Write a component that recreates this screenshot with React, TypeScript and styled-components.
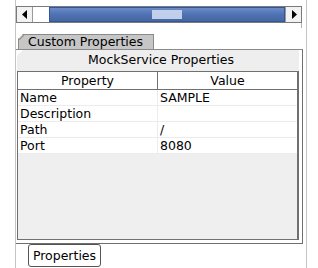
import React from 'react';
import styled, { createGlobalStyle } from 'styled-components';

const GlobalStyle = createGlobalStyle`
  html, body {
    margin: 0;
    padding: 0;
    background: #ffffff;
  }
  body {
    font-family: 'DejaVu Sans', 'Liberation Sans', sans-serif;
    font-size: 12.5px;
    color: #000;
  }
`;

interface IRow {
  name: string;
  value: string;
}

const rows: IRow[] = [
  { name: 'Name', value: 'SAMPLE' },
  { name: 'Description', value: '' },
  { name: 'Path', value: '/' },
  { name: 'Port', value: '8080' },
];

const ArrowLeft = () => (
  <svg width="6" height="9" viewBox="0 0 6 9">
    <path d="M5 0 L0 4.5 L5 9 Z" fill="#000" />
  </svg>
);

const ArrowRight = () => (
  <svg width="6" height="9" viewBox="0 0 6 9">
    <path d="M1 0 L6 4.5 L1 9 Z" fill="#000" />
  </svg>
);

const App: React.FC = () => (
  <>
    <GlobalStyle />
    <SFrame>
      <SScrollBar>
        <SArrowButton>
          <ArrowLeft />
        </SArrowButton>
        <STrack />
        <SThumb>
          <SGrip />
        </SThumb>
        <SArrowButton>
          <ArrowRight />
        </SArrowButton>
      </SScrollBar>
      <STabStrip>
        <STab>Custom Properties</STab>
        <STick />
      </STabStrip>
      <SPanel>
        <STitle>MockService Properties</STitle>
        <SScrollPane>
          <STable>
            <SHeaderCell>Property</SHeaderCell>
            <SHeaderCell $last>Value</SHeaderCell>
            {rows.map((row) => (
              <React.Fragment key={row.name}>
                <SCell>{row.name}</SCell>
                <SCell $last>{row.value}</SCell>
              </React.Fragment>
            ))}
          </STable>
        </SScrollPane>
      </SPanel>
      <SFooter>
        <SButton>Properties</SButton>
      </SFooter>
    </SFrame>
  </>
);

export default App;

const SFrame = styled.div`
  box-sizing: border-box;
  margin-left: 15px;
  width: 292px;
  height: 268px;
  border-left: 1px solid #c4c4c4;
  border-right: 1px solid #c4c4c4;
  display: flex;
  flex-direction: column;
`;

const SScrollBar = styled.div`
  box-sizing: border-box;
  margin-top: 6px;
  width: 286px;
  height: 17px;
  border: 1px solid #7a7a7a;
  display: flex;
  background: #fff;
`;

const SArrowButton = styled.div`
  width: 15px;
  flex: none;
  display: flex;
  align-items: center;
  justify-content: center;
  background: #f2f2f2;
  border-left: 1px solid #9a9a9a;
  &:first-child {
    border-left: none;
    border-right: 1px solid #9a9a9a;
  }
`;

const STrack = styled.div`
  width: 16px;
  flex: none;
  background: #fff;
`;

const SThumb = styled.div`
  flex: 1;
  box-sizing: border-box;
  border: 1px solid #35559a;
  background: linear-gradient(#6b8cc8, #4f72b4 50%, #45689f);
  display: flex;
  align-items: center;
  justify-content: center;
`;

const SGrip = styled.div`
  width: 30px;
  height: 9px;
  background-image: radial-gradient(circle, #c9d6ee 0.7px, transparent 0.8px);
  background-size: 2px 2px;
`;

const STabStrip = styled.div`
  margin-top: 11px;
  padding-left: 2px;
  display: flex;
  height: 15px;
`;

const STick = styled.div`
  margin-left: auto;
  margin-right: 4px;
  margin-top: -11px;
  width: 1px;
  height: 5px;
  background: #b0b0b0;
`;

const STab = styled.div`
  box-sizing: border-box;
  width: 136px;
  height: 15px;
  padding-left: 9px;
  line-height: 14px;
  white-space: nowrap;
  background: #c6c6c6;
  border: 1px solid #8a8a8a;
  border-bottom: none;
  clip-path: polygon(5px 0, 100% 0, 100% 100%, 0 100%, 0 5px);
  position: relative;
  &::before {
    content: '';
    position: absolute;
    left: -1px;
    top: 2px;
    width: 7px;
    height: 1px;
    background: #8a8a8a;
    transform: rotate(-45deg);
  }
`;

const SPanel = styled.div`
  box-sizing: border-box;
  width: 287px;
  height: 195px;
  border-right: 1px solid #6e6e6e;
  border-bottom: 1px solid #6e6e6e;
  border-top: 1px solid #8a8a8a;
  padding: 0 3px 3px 1px;
  display: flex;
  flex-direction: column;
`;

const STitle = styled.div`
  height: 21px;
  line-height: 20px;
  text-align: center;
  padding-left: 6px;
  background: #eeeeee;
  flex: none;
  clip-path: polygon(6px 0, 100% 0, 100% 100%, 0 100%, 0 6px);
`;

const SScrollPane = styled.div`
  box-sizing: border-box;
  flex: 1;
  border: 1px solid #707070;
  border-right-width: 2px;
  background: #efefef;
`;

const STable = styled.div`
  display: grid;
  grid-template-columns: 140px 1fr;
  grid-auto-rows: 16px;
  grid-template-rows: 18px;
  background: #fff;
`;

const SHeaderCell = styled.div<{ $last?: boolean }>`
  box-sizing: border-box;
  text-align: center;
  line-height: 17px;
  background: #fff;
  border-bottom: 1px solid #707070;
  border-right: ${({ $last }) => ($last ? 'none' : '1px solid #707070')};
`;

const SCell = styled.div<{ $last?: boolean }>`
  box-sizing: border-box;
  padding-left: 2px;
  line-height: 15px;
  white-space: nowrap;
  border-bottom: 1px solid #ececec;
  border-right: ${({ $last }) => ($last ? 'none' : '1px solid #ececec')};
`;

const SFooter = styled.div`
  padding: 0 0 0 12px;
  display: flex;
`;

const SButton = styled.div`
  box-sizing: border-box;
  width: 73px;
  height: 23px;
  border: 1px solid #555;
  border-radius: 3px;
  text-align: center;
  line-height: 21px;
  background: #fff;
`;
